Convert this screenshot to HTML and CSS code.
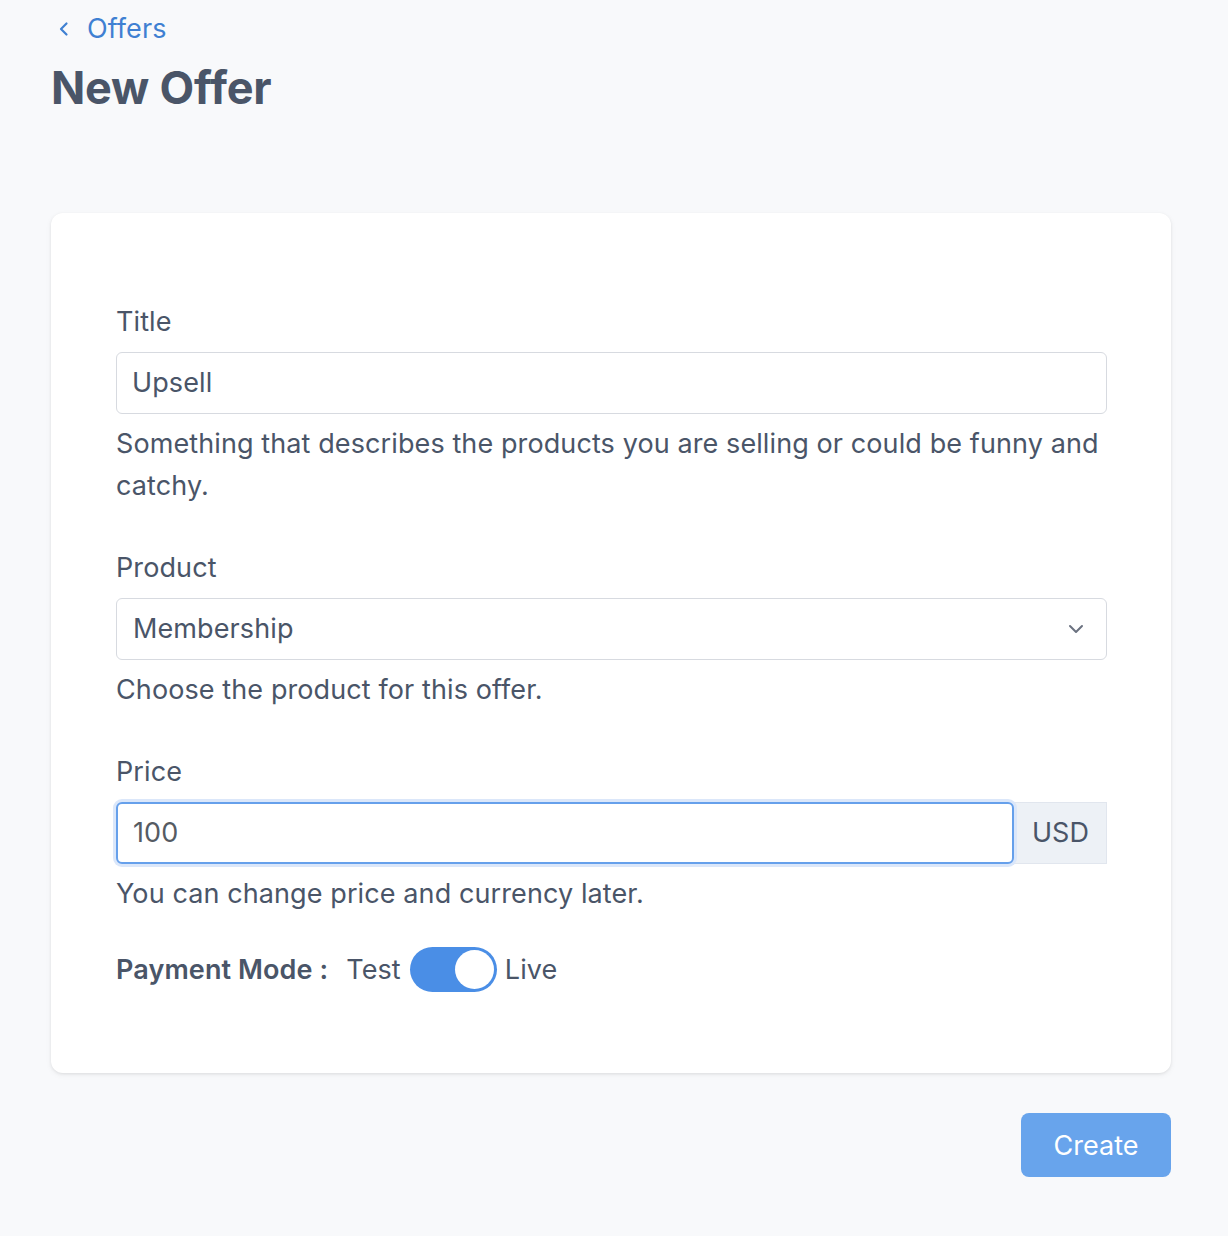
FILE: index.html
```html
<!DOCTYPE html>
<html lang="en">
<head>
<meta charset="utf-8">
<title>New Offer</title>
<link rel="stylesheet" href="styles.css">
</head>
<body>
<div class="page">
  <header class="header">
    <a class="back" href="#">
      <svg class="back-icon" viewBox="0 0 12 16" width="12" height="16" aria-hidden="true"><path d="M8.5 2.5 L3 8 L8.5 13.5" fill="none" stroke="currentColor" stroke-width="2.2" stroke-linecap="round" stroke-linejoin="round"/></svg>
      <span>Offers</span>
    </a>
    <h1 class="title">New Offer</h1>
  </header>

  <form class="card">
    <div class="field">
      <label class="label">Title</label>
      <div class="input">Upsell</div>
      <p class="help">Something that describes the products you are selling or could be funny and catchy.</p>
    </div>
    <div class="field">
      <label class="label">Product</label>
      <div class="input select">
        <span>Membership</span>
        <svg class="chev" viewBox="0 0 20 20" width="20" height="20" aria-hidden="true"><path d="M4 7 L10 13 L16 7" fill="none" stroke="currentColor" stroke-width="2" stroke-linecap="round" stroke-linejoin="round"/></svg>
      </div>
      <p class="help">Choose the product for this offer.</p>
    </div>
    <div class="field">
      <label class="label">Price</label>
      <div class="group">
        <div class="input focus">100</div>
        <div class="addon">USD</div>
      </div>
      <p class="help">You can change price and currency later.</p>
    </div>
    <div class="mode">
      <span class="mode-label">Payment Mode :</span>
      <span class="mode-opt">Test</span>
      <span class="toggle"><span class="knob"></span></span>
      <span class="mode-opt live">Live</span>
    </div>
  </form>

  <div class="actions">
    <button class="btn" type="button">Create</button>
  </div>
</div>
</body>
</html>
```

FILE: styles.css
```css
* { box-sizing: border-box; }
html, body { margin: 0; padding: 0; }
body {
  background: #f8f9fb;
  font-family: Inter, "Noto Sans", "Liberation Sans", sans-serif;
  color: #4a5568;
  font-size: 27px;
  line-height: 36px;
  letter-spacing: 0.1px;
}
.page {
  padding: 11px 57px 0 51px;
}
.header { display: flex; flex-direction: column; }
.back {
  display: flex;
  align-items: center;
  gap: 17px;
  color: #3f80d2;
  text-decoration: none;
  font-size: 27px;
  line-height: 36px;
  padding-left: 7px;
}
.back-icon { width: 12px; height: 16px; }
.title {
  margin: 16px 0 0 0;
  font-size: 45px;
  line-height: 50px;
  font-weight: 700;
  color: #4a5568;
  letter-spacing: -0.2px;
}
.card {
  margin-top: 100px;
  background: #fff;
  border-radius: 12px;
  box-shadow: 0 1px 3px rgba(0,0,0,0.08), 0 2px 6px rgba(0,0,0,0.05);
  padding: 91px 64px 81px 65px;
  display: flex;
  flex-direction: column;
}
.field { display: flex; flex-direction: column; margin-bottom: 43px; }
.field:nth-child(3) { margin-bottom: 32px; }
.label { display: block; line-height: 36px; }
.input {
  margin-top: 12px;
  height: 62px;
  border: 1.5px solid #d7dae0;
  border-radius: 6px;
  padding: 0 15px;
  display: flex;
  align-items: center;
  color: #4a5568;
  background: #fff;
}
.select { justify-content: space-between; padding: 0 20px 0 16px; }
.chev { color: #6b7280; }
.group { display: flex; margin-top: 12px; }
.group .input { margin-top: 0; flex: 1; }
.focus {
  border: 2px solid #66a0eb;
  box-shadow: 0 0 0 3px #dbe7fa;
  color: #555b63;
  position: relative;
  z-index: 1;
}
.addon {
  width: 93px;
  height: 62px;
  background: #edf1f6;
  border: 1.5px solid #e1e6ee;
  display: flex;
  align-items: center;
  justify-content: center;
  color: #4a5568;
}
.help {
  margin: 9px 0 0 0;
  line-height: 42px;
}
.mode {
  display: flex;
  align-items: center;
  height: 45px;
}
.mode-label { font-weight: 600; margin-right: 18px; }
.toggle {
  width: 87px;
  height: 45px;
  border-radius: 23px;
  background: #4a8ee6;
  margin: 0 8px 0 9px;
  position: relative;
}
.knob {
  position: absolute;
  right: 3px;
  top: 3px;
  width: 39px;
  height: 39px;
  border-radius: 50%;
  background: #fff;
}
.actions {
  display: flex;
  justify-content: flex-end;
  margin-top: 40px;
}
.btn {
  width: 150px;
  height: 64px;
  border: none;
  border-radius: 8px;
  background: #68a4ec;
  color: #fff;
  font-family: inherit;
  font-size: 27px;
}
```
